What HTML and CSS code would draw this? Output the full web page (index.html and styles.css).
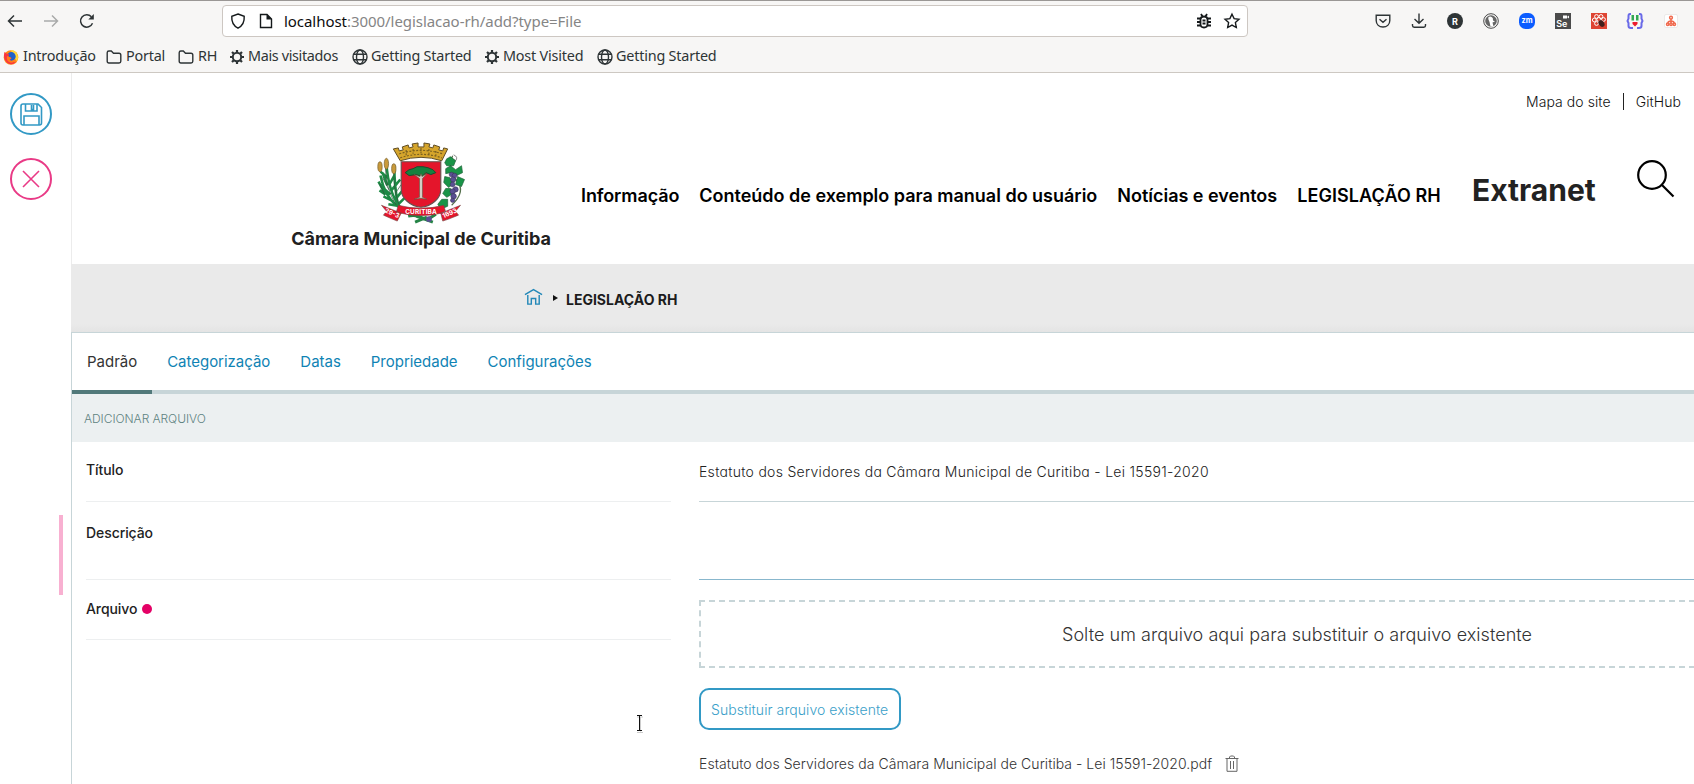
FILE: index.html
```html
<!DOCTYPE html>
<html lang="pt-br">
<head>
<meta charset="utf-8">
<title>Adicionar Arquivo</title>
<link rel="stylesheet" href="styles.css">
</head>
<body>
<div class="browser">
  <div class="navbar">
    <svg class="nav-ico back" viewBox="0 0 16 16"><path d="M15 8H1.500M7 2.500L1.500 8L7 13.500"/></svg>
    <svg class="nav-ico fwd" viewBox="0 0 16 16"><path d="M1 8H14.500M9 2.500L14.500 8L9 13.500"/></svg>
    <svg class="nav-ico reload" viewBox="0 0 16 16"><path d="M13.500 10.300A6.200 6.200 0 1 1 12.400 3.800"/><path class="solid" d="M14.800 1V6.500H9.300Z"/></svg>
    <div class="urlbar">
      <svg class="u-ico" viewBox="0 0 16 16"><path d="M8 1L14.200 3.300C14.600 8.800 12.300 13 8 15.200C3.700 13 1.400 8.800 1.800 3.300Z"/></svg>
      <svg class="u-ico doc" viewBox="0 0 16 16"><path d="M2.500 1.500H9L13.500 6V14.500H2.500Z"/><path class="solid" d="M8.500 1V6.500H14Z"/></svg>
      <span class="url"><b>localhost</b>:3000/legislacao-rh/add?type=File</span>
      <svg class="u-ico bug" viewBox="0 0 16 16"><path d="M4.500 6.500Q4.500 3.500 8 3.500T11.500 6.500V11Q11.500 14.500 8 14.500T4.500 11ZM5 1L6.500 3.500M11 1L9.500 3.500M1 5.500H4M1 9H4M1 12.500H4M12 5.500H15M12 9H15M12 12.500H15M6.500 7.500H9.500M6.500 10.500H9.500"/></svg>
      <svg class="u-ico" viewBox="0 0 16 16"><path d="M8 1.200L10.100 5.600L15 6.200L11.400 9.600L12.300 14.500L8 12.100L3.700 14.500L4.600 9.600L1 6.200L5.900 5.600Z"/></svg>
    </div>
    <div class="exts">
      <svg viewBox="0 0 16 16"><path class="ln" d="M1.200 2.300H14.800V7.500C14.800 11.500 11.800 14 8 14S1.200 11.500 1.200 7.500ZM4.500 6.200L8 9.300L11.500 6.200"/></svg>
      <svg viewBox="0 0 16 16"><path class="ln" d="M8 .5V10M3.500 6L8 10.300L12.500 6M1.500 11V12.500Q1.500 14.200 3.200 14.200H12.800Q14.500 14.200 14.500 12.500V11"/></svg>
      <svg viewBox="0 0 16 16"><circle cx="8" cy="8" r="8" fill="#2e3436"/><text x="8" y="11.500" class="r">R</text></svg>
      <svg viewBox="0 0 16 16"><circle cx="8" cy="8" r="7.300" fill="#f7f6f5" stroke="#4a4a4a" stroke-width="1"/><circle cx="8" cy="8" r="5.800" fill="#666"/><path d="M5.500 4Q8 2.500 9.800 5L10 7.500L12 8.500L9.500 9.500L10.500 13.500L7.500 13.600L6.500 9Q4.500 6 5.500 4Z" fill="#fff"/></svg>
      <svg viewBox="0 0 16 16"><rect width="16" height="16" rx="6.500" fill="#0b5cff"/><text x="8" y="10.400" class="zm">zm</text></svg>
      <svg viewBox="0 0 16 16"><rect width="16" height="16" fill="#4b4b4b"/><path d="M8 2.500H12V5.500H8ZM12 4L14 2.500V5.500Z" fill="#fff"/><text x="6.800" y="13.800" class="se">Se</text></svg>
      <svg viewBox="0 0 16 16"><rect width="16" height="16" fill="#de4432"/><g fill="none" stroke="#fff" stroke-width="1"><circle cx="5.500" cy="3.500" r="1.900"/><circle cx="10" cy="3.500" r="1.900"/><circle cx="3.300" cy="7" r="1.900"/><circle cx="7.800" cy="6.500" r="2"/><circle cx="12.500" cy="6.500" r="1.900"/><circle cx="5.500" cy="10.500" r="1.900"/></g><ellipse cx="10.500" cy="10.500" rx="2.600" ry="3.700" fill="#42201c" transform="rotate(-35 10.500 10.500)"/></svg>
      <svg viewBox="0 0 16 16"><path d="M4 1H3Q1.500 1 1.500 3V5.500L.5 8L1.500 10V13Q1.500 15 4 15H6M12 1H13Q14.500 1 14.500 3V5.500L15.500 8L14.500 10V13Q14.500 15 12 15H10" fill="none" stroke="#6a6ae8" stroke-width="2"/><path d="M4.500 2H7V7.500H4.500ZM9 2H11.500V7.500H9Z" fill="#32a852"/><path d="M5.500 9H10.500V11L8 13.500L5.500 11Z" fill="#ed1c2e"/></svg>
      <svg viewBox="0 0 16 16"><rect x="1.500" y="1.500" width="13" height="13" rx="1.500" fill="#fff" stroke="#e5e3e1" stroke-width=".7"/><g fill="none" stroke="#f0694d" stroke-width="1.500"><circle cx="8" cy="4.700" r="1.400"/><circle cx="4.700" cy="11.300" r="1.200"/><circle cx="8" cy="11.300" r="1.200"/><circle cx="11.300" cy="11.300" r="1.200"/><path d="M8 6V10M5 10Q5 8 8 8T11 10"/></g></svg>
    </div>
  </div>
  <div class="bookmarks">
    <svg viewBox="0 0 16 16"><circle cx="8" cy="8.500" r="7.300" fill="#ff8a16"/><path d="M8 1Q12 1 14 4.500Q16 8.500 14 12L10 8Z" fill="#ffd83a"/><circle cx="8.300" cy="7.500" r="4.400" fill="#2060c8"/><path d="M1.300 3Q0 11 4.500 14Q9 17 13.500 12.500Q9 14 6.500 11L8.500 9L5.500 7.500L6 5Q3 5 1.300 3Z" fill="#f9363f"/><path d="M5.500 7.500L8.500 9L6.500 11Q9 13 12.500 10Q11.500 14.500 7 13.500Q3 12 4 7Z" fill="#ff7b1b"/></svg><span class="bk intro">Introdução</span>
    <svg viewBox="0 0 16 16"><path class="ln" d="M1.200 3.700Q1.200 2 2.900 2H5.300L7.500 4.200H13Q14.800 4.200 14.800 6V12.300Q14.800 14 13.100 14H2.900Q1.200 14 1.200 12.300Z"/></svg><span class="bk portal">Portal</span>
    <svg viewBox="0 0 16 16"><path class="ln" d="M1.200 3.700Q1.200 2 2.900 2H5.300L7.500 4.200H13Q14.800 4.200 14.800 6V12.300Q14.800 14 13.100 14H2.900Q1.200 14 1.200 12.300Z"/></svg><span class="bk rh">RH</span>
    <svg viewBox="0 0 16 16"><circle class="gear" cx="8" cy="8" r="4.200"/><path class="teeth" d="M8 1V3.500M8 12.500V15M1 8H3.500M12.500 8H15M3 3L4.800 4.800M11.200 11.200L13 13M13 3L11.200 4.800M4.800 11.200L3 13"/></svg><span class="bk mais">Mais visitados</span>
    <svg viewBox="0 0 16 16"><g class="ln"><circle cx="8" cy="8" r="7"/><ellipse cx="8" cy="8" rx="3.500" ry="7"/><path d="M1.700 5.200H14.300M1.700 10.800H14.300"/></g></svg><span class="bk gs">Getting Started</span>
    <svg viewBox="0 0 16 16"><circle class="gear" cx="8" cy="8" r="4.200"/><path class="teeth" d="M8 1V3.500M8 12.500V15M1 8H3.500M12.500 8H15M3 3L4.800 4.800M11.200 11.200L13 13M13 3L11.200 4.800M4.800 11.200L3 13"/></svg><span class="bk most">Most Visited</span>
    <svg viewBox="0 0 16 16"><g class="ln"><circle cx="8" cy="8" r="7"/><ellipse cx="8" cy="8" rx="3.500" ry="7"/><path d="M1.700 5.200H14.300M1.700 10.800H14.300"/></g></svg><span class="bk gs">Getting Started</span>
  </div>
</div>
<div class="app">
  <aside class="toolbar">
    <svg class="tool save" viewBox="0 0 42 42"><circle cx="21" cy="21" r="20"/><path d="M11 13Q11 11 13 11H28L31.500 14.500V30Q31.500 32 29.500 32H13Q11 32 11 30Z"/><path d="M15.500 11V18H27V11M21.500 12V16.500H23.500V12M14 32V23H29V32" /></svg>
    <svg class="tool cancel" viewBox="0 0 42 42"><circle cx="21" cy="21" r="20"/><path d="M13 13L29 29M29 13L13 29"/></svg>
    <div class="handle"></div>
  </aside>
  <main class="page">
    <header class="site-header">
      <div class="tools"><span class="mapa">Mapa do site</span><i></i><span class="github">GitHub</span></div>
      <div class="brand">
        <svg class="crest" viewBox="0 0 90 86">
          <g fill="none" stroke="#1d8a45" stroke-width="2.600"><path d="M23 65Q12 50 10 22M21 65Q8 55 4 34M22 66Q18 45 18 24M6 31L11 44M2 40L9 53L3 49M12 37L4 30M13 43L18 34M15 49L24 38M14 53L4 44M19 58L28 47M17 60L7 55M22 63L28 57M24 65L12 63"/></g>
          <g fill="none" stroke="#31533b" stroke-width=".7"><path d="M20 64Q9 47 9 25M18 26Q16 45 23 64M8 53L3 42M19 52L25 43M13 49L6 36"/></g>
          <g fill="#c99a3b" stroke="#75602e" stroke-width=".7"><ellipse cx="3.500" cy="25" rx="2.200" ry="5"/><ellipse cx="10" cy="22" rx="2.200" ry="5.500"/><ellipse cx="17.500" cy="27" rx="2.200" ry="5"/></g>
          <path d="M77 14Q71 28 81 39T76 64" fill="none" stroke="#54704d" stroke-width="1.300"/>
          <path d="M78 13Q83 15 80 19L74 15" fill="none" stroke="#555" stroke-width=".7"/>
          <g fill="#199447" stroke="#20633a" stroke-width=".7"><path d="M71 17L75 15L80 19L78 24L71 24L69 21Z"/><path d="M70 27L75 24L80 28L86 24L87 31L81 34L75 31L70 32Z"/><path d="M69 35L74 36L78 42L73 46L68 41Z"/><path d="M82 35L89 38L86 45L80 43Z"/><path d="M70 47L75 47L76 53L71 56L67 52Z"/><path d="M66 58L72 58L72 65L65 68L62 63Z"/></g>
          <g fill="#594f92" stroke="#373150" stroke-width=".5"><circle cx="76" cy="33" r="2.500"/><circle cx="79" cy="34" r="2.500"/><circle cx="77.500" cy="38" r="2.700"/><circle cx="77" cy="43" r="2.500"/><circle cx="80" cy="48" r="2.700"/><circle cx="77" cy="50" r="2.700"/><circle cx="78" cy="55" r="2.800"/><circle cx="77" cy="59" r="2.200"/></g>
          <path d="M24 19Q45 12 66 19L72 7L68 6L67 9L63 8L64 5L58 3L57 6L53 5L54 2L48 1V5H42V1L36 2L37 5L33 6L32 3L26 5L27 8L23 9L22 6L17 7Z" fill="#d5a52c" stroke="#5e4b22" stroke-width="1"/>
          <path d="M23 12Q45 5 67 12M24 16Q45 9 66 16M30 8V15M37 7V12M45 6V12M53 7V13M60 9V15" fill="none" stroke="#7b6120" stroke-width="1.200" stroke-dasharray="2 1.500"/>
          <path d="M25 20H65V48C65 57 56 65 45 66C34 65 25 57 25 48Z" fill="#e4152b" stroke="#68504e" stroke-width="1.200"/>
          <path d="M29 31L33 28L37 27L41 25L47 25L52 26L57 28L60 31L55 33L50 31L46 35L40 33L33 34Z" fill="#16813f" stroke="#174d2d" stroke-width="1"/>
          <path d="M38 33L44 35L45 32L46 35L51 32L46.500 37V56L51 58L45 57L38 58L43.500 56V37Z" fill="#d4d0c7" stroke="#64513e" stroke-width=".6"/>
          <path d="M32 75Q42 73 51 79L60 73M39 81L51 76M57 81L40 75" fill="none" stroke="#258446" stroke-width="3"/><circle cx="53" cy="78" r="3" fill="#594f92"/>
          <path d="M22 64Q45 70 68 64L70 71Q45 78 20 71ZM5 64L25 72L21 80L16 78L7 74L10 70ZM85 64L65 72L67 80L73 78L83 74L80 70Z" fill="#e4152b" stroke="#724542" stroke-width=".6"/>
          <text class="ribbon" x="45" y="73" textLength="32">CURITIBA</text><text class="ribbon" x="15" y="74" transform="rotate(24 15 74)">29-3</text><text class="ribbon" x="75" y="74" transform="rotate(-24 75 74)">1693</text>
        </svg>
        <div class="brand-name">Câmara Municipal de Curitiba</div>
      </div>
      <nav class="menu"><a class="m1">Informação</a><a class="m2">Conteúdo de exemplo para manual do usuário</a><a class="m3">Notícias e eventos</a><a class="m4">LEGISLAÇÃO RH</a></nav>
      <div class="extranet">Extranet</div>
      <svg class="search" viewBox="0 0 38 38"><circle cx="15" cy="15" r="13.800"/><path d="M25 25L36.500 36.500"/></svg>
    </header>
    <div class="crumbs">
      <svg class="home" viewBox="0 0 20 18"><path d="M1 6.500L10 1.200L19 6.500M4 7V16.500H7.700V10.500H12.300V16.500H16V7"/></svg>
      <svg class="arrow" viewBox="0 0 5 6"><path d="M0 0L5 3L0 6Z"/></svg>
      <span class="crumb">LEGISLAÇÃO RH</span>
    </div>
    <section class="form">
      <div class="tabs"><a class="active">Padrão</a><a>Categorização</a><a>Datas</a><a>Propriedade</a><a>Configurações</a></div>
      <div class="section-title"><span>ADICIONAR ARQUIVO</span></div>
      <div class="fields">
        <div class="col labels">
          <div class="label l1">Título</div>
          <div class="label l2">Descrição</div>
          <div class="label l3">Arquivo<i></i></div>
        </div>
        <div class="col values">
          <div class="value title"><span>Estatuto dos Servidores da Câmara Municipal de Curitiba - Lei 15591-2020</span></div>
          <div class="value desc"></div>
          <div class="drop"><span>Solte um arquivo aqui para substituir o arquivo existente</span></div>
          <div class="replace"><span>Substituir arquivo existente</span></div>
          <div class="file"><span>Estatuto dos Servidores da Câmara Municipal de Curitiba - Lei 15591-2020.pdf</span>
            <svg class="trash" viewBox="0 0 14 17"><path d="M.5 3.500H13.500M4.500 3.500V2L5.500 1H8.500L9.500 2V3.500M2 3.500V16.300H12V3.500M5.500 6V14M8.500 6V14"/></svg></div>
        </div>
      </div>
    </section>
  </main>
</div>
<svg class="cursor" viewBox="0 0 9 18"><path class="halo" d="M2 2H8M5.500 2V16.500M2 17.500H8"/><path d="M2 .5H7M4.500 .5V15.500M2 15.500H7"/></svg>
</body>
</html>
```
FILE: styles.css
```css
* { box-sizing: border-box; }
html, body { margin: 0; width: 1694px; height: 784px; overflow: hidden; background: #fff; }
body { font-family: Inter, "Liberation Sans", sans-serif; color: #212529; }
svg { display: block; flex: none; overflow: visible; }
span, a { white-space: nowrap; }

/* Browser chrome */
.browser { height: 73px; background: #f7f6f5; border-top: 1px solid #9a9795; border-bottom: 1px solid #cdc8c2; font-family: "Noto Sans", sans-serif; color: #2e3436; }
.navbar { height: 40px; display: flex; align-items: center; padding-left: 7px; }
.nav-ico { width: 16px; height: 16px; fill: none; stroke: #2e3436; stroke-width: 1.5; }
.nav-ico .solid { fill: #2e3436; stroke: none; }
.fwd { margin-left: 20px; stroke: #a9aaaa; }
.reload { margin-left: 20px; }
.urlbar { margin-left: 127px; width: 1026px; height: 32px; background: #fff; border: 1px solid #cdc7c2; border-radius: 4px; display: flex; align-items: center; padding: 0 7px; }
.u-ico { width: 16px; height: 16px; fill: none; stroke: #15191b; stroke-width: 1.4; }
.u-ico .solid { fill: #15191b; stroke: none; }
.u-ico.doc { margin-left: 12px; }
.u-ico.bug { margin-left: auto; margin-right: 12px; stroke-width: 1.8; }
.url { margin-left: 10px; font-size: 15px; color: #858585; letter-spacing: -.05px; }
.url b { font-weight: 400; color: #0c0c0d; }
.exts { margin-left: 127px; display: flex; gap: 20px; }
.exts svg, .bookmarks svg { width: 16px; height: 16px; }
.ln { fill: none; stroke: #2e3436; stroke-width: 1.4; }
.gear { fill: none; stroke: #2e3436; stroke-width: 2; }
.teeth { fill: none; stroke: #2e3436; stroke-width: 2.2; }
.r, .zm, .se { fill: #fff; font-weight: 700; text-anchor: middle; font-family: Inter, sans-serif; font-size: 9px; }
.zm { font-size: 7.5px; }
.se { font-size: 9px; font-weight: 600; }
.bookmarks { height: 31px; display: flex; align-items: center; padding-left: 3px; }
.bk { font-size: 14.4px; margin-left: 4px; letter-spacing: -.2px; margin-top: -2px; }
.intro { width: 83px; } .portal { width: 52px; } .rh { width: 32px; } .mais { width: 103px; letter-spacing: -.35px; margin-left: 3px; } .gs { width: 112px; margin-left: 3px; } .most { width: 94px; margin-left: 3px; }
.rh + svg { margin-left: -1px; }
.mais + svg { margin-left: 1px; }
.gs + svg { margin-left: 1px; }

/* Application */
.app { display: flex; height: 711px; }
.toolbar { width: 71px; display: flex; flex-direction: column; padding: 20px 0 0 10px; }
.tool { width: 42px; height: 42px; fill: none; stroke-width: 2; }
.tool path { stroke-width: 1.6; }
.save { stroke: #3299c5; }
.cancel { stroke: #e93a86; margin-top: 23px; }
.handle { width: 4px; height: 80px; margin: 315px 0 0 49px; background: #f8b0d1; }
.page { width: 1623px; overflow: hidden; }
.site-header { height: 191px; border-left: 1px solid #ececec; display: grid; grid-template-columns: 219px 290px 891px 165px 57px; grid-template-rows: 68px 123px; }
.tools { grid-column: 1 / 6; display: flex; align-items: center; justify-content: flex-end; font-size: 14px; font-weight: 300; color: #111; padding: 0 13px 10px 0; margin-top: -1px; letter-spacing: .07px; }
.tools i { width: 1px; height: 17px; background: #222; margin: 0 12px; }
.brand { grid-column: 2; width: 260px; display: flex; flex-direction: column; align-items: center; }
.crest { width: 90px; height: 85px; margin-top: 1px; }
.brand-name { font-size: 18px; font-weight: 700; white-space: nowrap; line-height: 22px; margin-top: 1px; color: #212121; }
.ribbon { fill: #fff; font: 700 6.5px Inter, sans-serif; text-anchor: middle; }
.menu { display: flex; gap: 20px; font-size: 18px; font-weight: 600; color: #000; line-height: 22px; padding-top: 44px; letter-spacing: -.01px; }
.m1 { letter-spacing: -.1px; }
.m4 { letter-spacing: .08px; }
.extranet { font-size: 30px; font-weight: 700; line-height: 36px; padding-top: 31px; color: #222; }
.search { width: 38px; height: 38px; margin-top: 19px; fill: none; stroke: #000; stroke-width: 2.2; }
.crumbs { height: 68px; background: linear-gradient(#eaeaea 60px, #e4e4e4); display: flex; align-items: center; padding: 0 0 0 453px; }
.home { width: 19px; height: 18px; fill: none; stroke: #2388b8; stroke-width: 1.5; margin-top: -3px; }
.arrow { width: 5px; height: 6px; margin-left: 10px; fill: #111; }
.crumb { margin-left: 8px; font-size: 14px; font-weight: 700; color: #1c1c1c; margin-top: 2px; }
.form { height: 452px; border: 1px solid #c7d5d8; border-right: 0; border-bottom: 0; background: #fff; }
.tabs { height: 61px; border-bottom: 4px solid #c7d5d8; display: flex; font-size: 15px; color: #0f83b4; letter-spacing: -.02px; }
.tabs a { height: 61px; padding: 0 15px; line-height: 58px; }
.tabs .active { border-bottom: 4px solid #51797a; color: #333; }
.section-title { height: 48px; background: #ecf0f1; padding-left: 12px; font-size: 12px; font-weight: 300; line-height: 50px; color: #5f8381; letter-spacing: -.05px; }
.fields { display: flex; gap: 28px; padding-left: 14px; }
.labels { width: 585px; flex: none; }
.label { border-bottom: 1px solid #edeff0; font-size: 14px; font-weight: 500; line-height: 18px; color: #222; letter-spacing: -.08px; }
.l1 { height: 60px; padding-top: 19px; }
.l2 { height: 78px; padding-top: 22px; }
.l3 { height: 60px; padding-top: 20px; display: flex; align-items: center; padding-bottom: 21px; }
.l3 i { width: 10px; height: 10px; border-radius: 50%; background: #e40166; margin-left: 5px; }
.values { width: 1196px; flex: none; color: #333; }
.value { border-bottom: 1px solid #c7d5d8; }
.value.title { height: 60px; font-size: 14px; font-weight: 300; line-height: 60px; font-feature-settings: "cv11"; letter-spacing: .29px; color: #222; }
.value.desc { height: 78px; border-color: #88b7cd; }
.drop { margin-top: 20px; height: 68px; border: 2px dashed #c7d5d8; text-align: center; font-size: 18px; line-height: 66px; font-weight: 300; letter-spacing: .04px; }
.replace { margin-top: 20px; width: 202px; height: 42px; border: 2px solid #3299c5; border-radius: 10px; color: #3aa0c9; font-size: 14px; font-weight: 300; line-height: 40px; padding-left: 10px; letter-spacing: .07px; }
.file { display: flex; align-items: center; height: 20px; margin-top: 23px; font-size: 14px; font-weight: 300; letter-spacing: .043px; }
.trash { width: 14px; height: 17px; margin-left: 13px; fill: none; stroke: #666; stroke-width: 1; }
.cursor { position: absolute; left: 635px; top: 715px; width: 9px; height: 18px; fill: none; stroke: #111; stroke-width: 1; }
.cursor .halo { stroke: #ccc; stroke-width: 1; }
```
